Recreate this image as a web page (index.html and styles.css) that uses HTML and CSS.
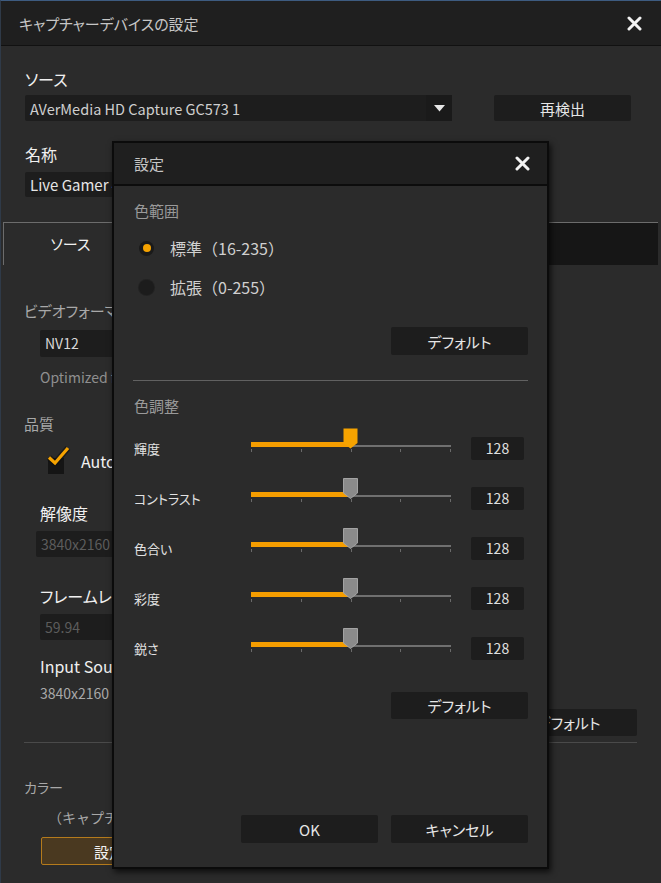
FILE: index.html
```html
<!DOCTYPE html>
<html lang="ja">
<head>
    <meta charset="UTF-8">
    <title>キャプチャーデバイスの設定</title>
    <link rel="stylesheet" href="styles.css">
</head>
<body>
<div class="window">
    <div class="titlebar">
        <span class="title">キャプチャーデバイスの設定</span>
        <svg class="close" width="15" height="15" viewBox="0 0 15 15"><path d="M2 2L13 13M13 2L2 13" stroke="#f2f2f2" stroke-width="3" stroke-linecap="round"/></svg>
    </div>

    <div class="head">
        <div class="label">ソース</div>
        <div class="row">
            <div class="select wide">
                <span class="val">AVerMedia HD Capture GC573 1</span>
                <span class="arrow"><svg width="11" height="7" viewBox="0 0 11 7"><path d="M0 0H11L5.5 6.5Z" fill="#e6e6e6"/></svg></span>
            </div>
            <button class="btn rescan">再検出</button>
        </div>
        <div class="label name">名称</div>
        <div class="input wide">Live Gamer 4K GC573</div>
    </div>

    <div class="tabs">
        <div class="tab on">ソース</div>
    </div>

    <div class="panel">
        <div class="sec fmt">ビデオフォーマット</div>
        <div class="input nv">NV12</div>
        <div class="note opt">Optimized for video quality</div>
        <div class="sec quality">品質</div>
        <div class="check">
            <span class="box"><svg width="24" height="22" viewBox="0 0 24 22"><path d="M2 11.5L8 17L21 2" fill="none" stroke="#111" stroke-width="6" stroke-linejoin="round" opacity=".6"/><path d="M2 11.5L8 17L21 2" fill="none" stroke="#f6a300" stroke-width="3.2"/></svg></span>
            <span class="txt">Auto</span>
        </div>
        <div class="big res">解像度</div>
        <div class="input dim r1">3840x2160</div>
        <div class="big fr">フレームレート</div>
        <div class="input dim r2">59.94</div>
        <div class="big insrc">Input Source</div>
        <div class="note insz">3840x2160 59.94</div>
        <div class="right"><button class="btn">デフォルト</button></div>
        <div class="hr"></div>
        <div class="sec color">カラー</div>
        <div class="note cap">（キャプチャーデバイスのカラー設定）</div>
        <button class="btn accent">設定</button>
    </div>

    <div class="dialog">
        <div class="dtitle">
            <span class="title">設定</span>
            <svg class="close" width="15" height="15" viewBox="0 0 15 15"><path d="M2 2L13 13M13 2L2 13" stroke="#f2f2f2" stroke-width="3" stroke-linecap="round"/></svg>
        </div>
        <div class="dbody">
            <div class="grp first">色範囲</div>
            <div class="radio r-on"><span class="dot"></span><span>標準（16-235）</span></div>
            <div class="radio r-off"><span class="dot"></span><span>拡張（0-255）</span></div>
            <button class="btn dflt">デフォルト</button>
            <div class="dhr"></div>
            <div class="grp adj">色調整</div>

            <div class="srow">
                <span class="slabel">輝度</span>
                <div class="slider focus">
                    <span class="track"></span><span class="fill" style="width:100px"></span>
                    <span class="ticks"><i></i><i></i><i></i><i></i><i></i></span>
                    <svg class="thumb" width="15" height="21" viewBox="0 0 15 21"><path d="M0.5 0.5H14.5V15L7.5 20.5L0.5 15Z" fill="#f6a300"/></svg>
                </div>
                <span class="num">128</span>
            </div>
            <div class="srow">
                <span class="slabel">コントラスト</span>
                <div class="slider">
                    <span class="track"></span><span class="fill" style="width:100px"></span>
                    <span class="ticks"><i></i><i></i><i></i><i></i><i></i></span>
                    <svg class="thumb" width="15" height="21" viewBox="0 0 15 21"><path d="M0.5 0.5H14.5V15L7.5 20.5L0.5 15Z" fill="#8b8b8b" stroke="#a3a3a3"/></svg>
                </div>
                <span class="num">128</span>
            </div>
            <div class="srow">
                <span class="slabel">色合い</span>
                <div class="slider">
                    <span class="track"></span><span class="fill" style="width:100px"></span>
                    <span class="ticks"><i></i><i></i><i></i><i></i><i></i></span>
                    <svg class="thumb" width="15" height="21" viewBox="0 0 15 21"><path d="M0.5 0.5H14.5V15L7.5 20.5L0.5 15Z" fill="#8b8b8b" stroke="#a3a3a3"/></svg>
                </div>
                <span class="num">128</span>
            </div>
            <div class="srow">
                <span class="slabel">彩度</span>
                <div class="slider">
                    <span class="track"></span><span class="fill" style="width:100px"></span>
                    <span class="ticks"><i></i><i></i><i></i><i></i><i></i></span>
                    <svg class="thumb" width="15" height="21" viewBox="0 0 15 21"><path d="M0.5 0.5H14.5V15L7.5 20.5L0.5 15Z" fill="#8b8b8b" stroke="#a3a3a3"/></svg>
                </div>
                <span class="num">128</span>
            </div>
            <div class="srow">
                <span class="slabel">鋭さ</span>
                <div class="slider">
                    <span class="track"></span><span class="fill" style="width:100px"></span>
                    <span class="ticks"><i></i><i></i><i></i><i></i><i></i></span>
                    <svg class="thumb" width="15" height="21" viewBox="0 0 15 21"><path d="M0.5 0.5H14.5V15L7.5 20.5L0.5 15Z" fill="#8b8b8b" stroke="#a3a3a3"/></svg>
                </div>
                <span class="num">128</span>
            </div>

            <button class="btn dflt2">デフォルト</button>
            <div class="foot">
                <button class="btn">OK</button>
                <button class="btn">キャンセル</button>
            </div>
        </div>
    </div>
</div>
</body>
</html>
```

FILE: styles.css
```css
*{margin:0; padding:0; box-sizing:border-box;}
body{background:#2b2b2b; font-family:"Noto Sans CJK JP","Noto Sans",sans-serif; font-feature-settings:"palt"; color:#e8e8e8;}

.window{position:relative; width:661px; height:883px; background:#2b2b2b; border-top:1px solid #3d5b80; border-left:1px solid #2f3a48; overflow:hidden;}
.titlebar{height:45px; display:flex; align-items:center; justify-content:space-between; padding:0 19px 0 18px; background:#1f1f1f; border-bottom:1px solid #111;}
.title{font-size:15px; color:#c6c6c6;}

.head{padding:0 24px;}
.label{font-size:16px; line-height:18px; margin-top:24px; color:#f0f0f0;}
.label.name{margin-top:24px;}
.row{display:flex; margin-top:7px;}
.select{height:26px; display:flex; align-items:center; background:#1d1d1d; border-radius:2px;}
.select .val{flex:1; padding-left:5px; font-size:14.5px; color:#cfcfcf;}
.select .arrow{width:26px; height:26px; display:flex; align-items:center; justify-content:center; background:#1a1a1a;}
.wide{width:427px;}
.btn{height:27px; width:137px; background:#1d1d1d; border:none; border-radius:2px; color:#e6e6e6; font-family:inherit; font-feature-settings:"palt"; font-size:15px;}
.rescan{margin-left:42px; height:26px;}
.input{height:25px; margin-top:9px; background:#1d1d1d; border-radius:2px; padding-left:5px; font-size:15px; line-height:25px; color:#e6e6e6;}

.tabs{margin:25px 0 0 2px; width:655px; height:43px; background:#161616; border-top:1px solid #6c6c6c;}
.tab{width:134px; height:42px; background:#2b2b2b; border-left:1px solid #6c6c6c; text-align:center; line-height:42px; font-size:15px; color:#f0f0f0;}

.panel{padding:0 24px 0 23px;}
.sec{font-size:15px; line-height:18px; color:#a8a8a8;}
.note{font-size:14px; line-height:18px; color:#8f8f8f; margin-left:16px; white-space:nowrap;}
.big{font-size:16px; line-height:20px; color:#f0f0f0; margin-left:16px; white-space:nowrap;}
.fmt{margin-top:37px;}
.nv{margin:10px 0 0 16px; width:300px; height:27px; line-height:27px; font-size:14px; color:#d8d8d8;}
.opt{margin-top:11px;}
.quality{margin-top:29px;}
.check{display:flex; align-items:center; height:20px; margin:18px 0 0 24px;}
.check .box{position:relative; width:16px; height:16px; background:#151515; margin-top:10px;}
.check .box svg{position:absolute; left:-1px; top:-12px;}
.check .txt{margin-left:17px; font-size:16px; color:#f2f2f2;}
.res{margin-top:32px;}
.dim{color:#5c5c5c; font-size:14px; height:26px; line-height:26px; width:300px;}
.r1{margin:8px 0 0 12px;}
.fr{margin-top:29px;}
.r2{margin:8px 0 0 16px;}
.insrc{margin-top:16px;}
.insz{margin-top:8px; color:#a8a8a8;}
.right{display:flex; justify-content:flex-end; margin-top:7px;}
.hr{height:1px; background:#4a4a4a; margin-top:6px;}
.color{margin-top:35px; font-size:14px;}
.cap{margin:12px 0 0 24px; color:#a8a8a8; font-feature-settings:normal;}
.accent{display:block; margin:11px 0 0 17px; width:136px; height:28px; background:#4a3920; border:1px solid #b57b1c; color:#f2f2f2;}

.dialog{position:absolute; left:111px; top:140px; width:437px; height:728px; background:#2b2b2b; border:2px solid #0b0b0b; box-shadow:2px 3px 6px rgba(0,0,0,.7);}
.dtitle{height:43px; display:flex; align-items:center; justify-content:space-between; padding:0 17px 0 20px; background:#1f1f1f; border-bottom:2px solid #0c0c0c;}
.dbody{display:flex; flex-direction:column; padding:0 19px 0 20px;}
.grp{font-size:15px; line-height:18px; color:#9a9a9a;}
.first{margin-top:16px;}
.radio{display:flex; align-items:center; height:20px; margin-left:5px; font-size:16px; color:#d0d0d0; font-feature-settings:normal;}
.r-on{margin-top:18px;}
.r-off{margin-top:19px;}
.dot{position:relative; width:15px; height:15px; border-radius:50%; background:#1a1a1a; margin-right:16px;}
.r-on .dot::after{content:""; position:absolute; left:3.5px; top:3.5px; width:8px; height:8px; border-radius:50%; background:#f6a300;}
.r-off .dot{background:#1c1c1c; box-shadow:0 0 0 1px #222;}
.dflt{align-self:flex-end; margin-top:30px; height:28px;}
.dhr{height:1px; background:#616161; margin:25px 0 0 -1px;}
.adj{margin-top:16px;}
.srow{display:flex; align-items:center; height:30px; margin-top:20px;}
.adj + .srow{margin-top:18px;}
.slabel{width:117px; font-size:13px; color:#e2e2e2;}
.slider{position:relative; width:200px; height:30px;}
.track{position:absolute; left:0; top:12px; width:200px; height:2px; background:#707070;}
.fill{position:absolute; left:0; top:9px; height:5px; background:#f59d00;}
.ticks{position:absolute; left:0; top:16px; width:200px; height:3px; display:flex; justify-content:space-between;}
.ticks i{width:1px; height:3px; background:#6a6a6a;}
.thumb{position:absolute; left:92px; top:-5px;}
.num{width:53px; height:23px; margin-left:20px; background:#1d1d1d; border-radius:2px; text-align:center; line-height:23px; font-size:14px; color:#e0e0e0;}
.dflt2{align-self:flex-end; margin-top:29px;}
.foot{display:flex; justify-content:flex-end; gap:13px; margin-top:96px;}
.foot .btn{height:28px;}
```
